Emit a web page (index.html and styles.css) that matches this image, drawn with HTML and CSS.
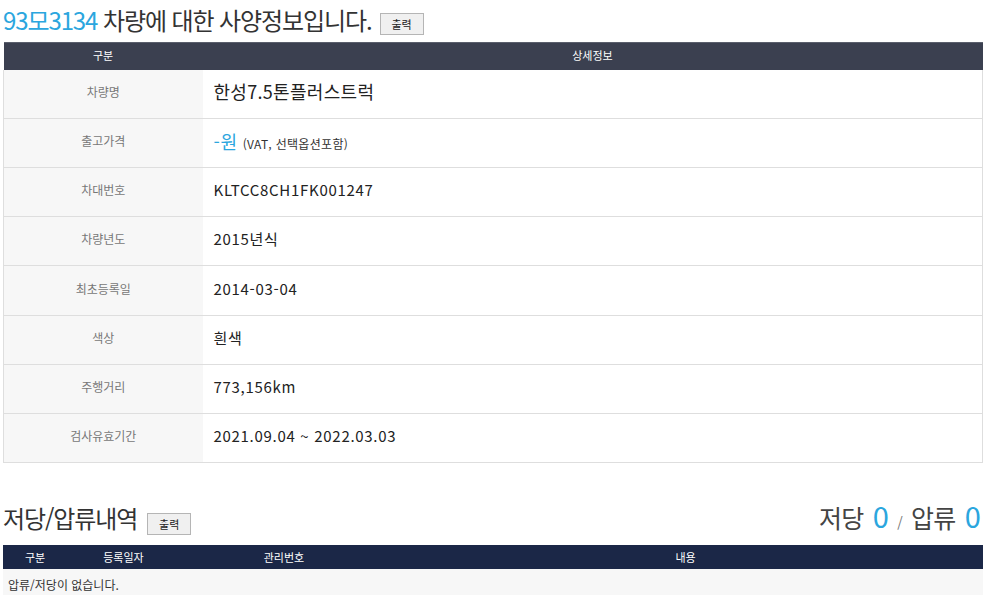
FILE: index.html
```html
<!DOCTYPE html>
<html lang="ko">
<head>
<meta charset="utf-8">
<link rel="stylesheet" href="styles.css">
</head>
<body>
<div class="page">
  <div class="title-row">
    <h1 class="title"><span class="blue">93모3134</span> 차량에 대한 사양정보입니다.</h1>
    <button class="print-btn">출력</button>
  </div>
  <table class="spec">
    <colgroup><col class="c-label"><col></colgroup>
    <thead>
      <tr><th>구분</th><th>상세정보</th></tr>
    </thead>
    <tbody>
      <tr><td class="label">차량명</td><td class="value big">한성7.5톤플러스트럭</td></tr>
      <tr><td class="label">출고가격</td><td class="value"><span class="price">-원</span> <span class="note">(VAT, 선택옵션포함)</span></td></tr>
      <tr><td class="label">차대번호</td><td class="value">KLTCC8CH1FK001247</td></tr>
      <tr><td class="label">차량년도</td><td class="value">2015년식</td></tr>
      <tr class="tall"><td class="label">최초등록일</td><td class="value">2014-03-04</td></tr>
      <tr><td class="label">색상</td><td class="value">흰색</td></tr>
      <tr><td class="label">주행거리</td><td class="value">773,156km</td></tr>
      <tr><td class="label">검사유효기간</td><td class="value">2021.09.04 ~ 2022.03.03</td></tr>
    </tbody>
  </table>

  <div class="sec-row">
    <div class="sec-left">
      <h2 class="title">저당/압류내역</h2>
      <button class="print-btn">출력</button>
    </div>
    <div class="counts">저당 <span class="num">0</span> <span class="slash">/</span> 압류 <span class="num">0</span></div>
  </div>
  <table class="lien">
    <colgroup><col class="l1"><col class="l2"><col class="l3"><col></colgroup>
    <thead>
      <tr><th>구분</th><th>등록일자</th><th>관리번호</th><th>내용</th></tr>
    </thead>
    <tbody>
      <tr><td colspan="4" class="empty">압류/저당이 없습니다.</td></tr>
    </tbody>
  </table>
</div>
</body>
</html>
```
FILE: styles.css
```css
* { box-sizing: border-box; }
html, body { margin: 0; padding: 0; background: #fff; }
body {
  font-family: "Noto Sans CJK KR", "Noto Sans", sans-serif;
  color: #333;
}
.page { padding: 0 6px 0 3px; width: 989px; }

.title-row {
  display: flex;
  align-items: flex-end;
  height: 42px;
  padding-bottom: 7px;
}
.title {
  margin: 0;
  font-size: 24px;
  font-weight: 400;
  letter-spacing: -1.1px;
  line-height: 30px;
  color: #333;
}
.blue { color: #2ba6de; }
.print-btn {
  font-family: "Noto Sans CJK KR", sans-serif;
  font-size: 11px;
  width: 44px;
  height: 22px;
  margin-left: 8px;
  margin-bottom: 0;
  padding: 0;
  background: #f0f0f0;
  border: 1px solid #b5b5b5;
  color: #222;
  line-height: 20px;
}

table { border-collapse: collapse; width: 980px; table-layout: fixed; }

.spec thead th {
  background: #3b4050;
  color: #fff;
  font-size: 11px;
  font-weight: 400;
  height: 27px;
  padding: 0 0 2px;
  border-top: 1px solid #5a5f6c;
}
.c-label { width: 199px; }
.spec tbody td {
  height: 49px;
  border-bottom: 1px solid #dedede;
  padding: 0 0 5px;
}
.spec tbody tr.tall td { height: 50px; }
.spec tbody tr td:first-child { border-left: 1px solid #dedede; }
.spec tbody tr td:last-child { border-right: 1px solid #dedede; }
.label {
  background: #f7f7f7;
  text-align: center;
  font-size: 12px;
  color: #777;
}
.value {
  padding-left: 11px !important;
  font-size: 15px;
  letter-spacing: 0.7px;
  color: #222;
}
.value.big { font-size: 18px; letter-spacing: 0.3px; }
.price { color: #2ba6de; font-size: 18px; }
.note { font-size: 12px; color: #333; letter-spacing: 0.3px; }

.sec-row {
  display: flex;
  justify-content: space-between;
  align-items: center;
  margin-top: 38px;
  height: 44px;
  padding-bottom: 10px;
}
.sec-left { display: flex; align-items: center; }
.sec-left .print-btn { margin-left: 10px; margin-top: 12px; }
.counts {
  font-size: 25px;
  color: #444;
  letter-spacing: -0.8px;
  padding-right: 2px;
  line-height: 32px;
}
.counts .num { color: #2ba6de; font-size: 29px; margin: 0 1px 0 3px; }
.counts .slash { font-size: 14px; color: #777; margin: 0 3px 0 2px; }

.lien thead th {
  background: #1b2747;
  color: #fff;
  font-size: 11px;
  font-weight: 400;
  height: 24px;
  padding: 0;
}
.l1 { width: 64px; }
.l2 { width: 113px; }
.l3 { width: 208px; }
.lien .empty {
  background: #f7f7f7;
  font-size: 12px;
  color: #333;
  padding: 6px 5px 10px;
  height: 34px;
}
```
